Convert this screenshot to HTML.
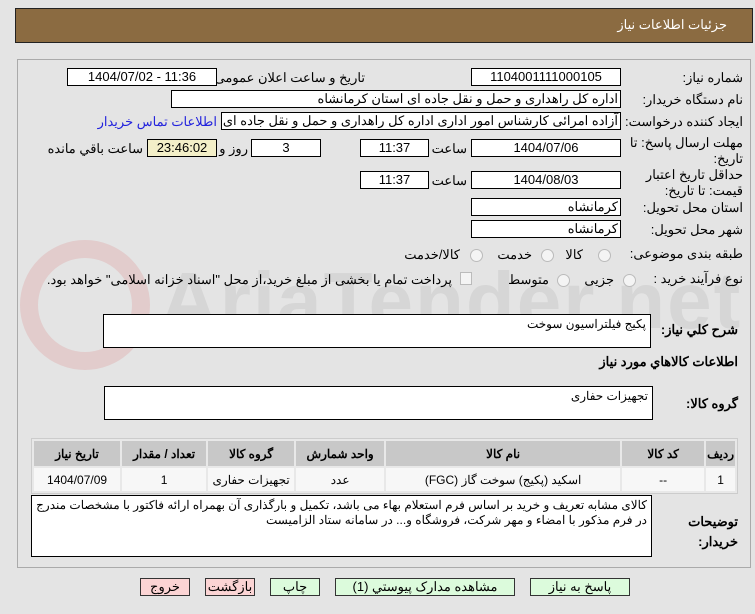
<!DOCTYPE html>
<html><head><meta charset="utf-8"><style>
body{margin:0;width:755px;height:614px;background:#e4e4e4;font-family:"Liberation Sans","Noto Sans CJK SC",sans-serif;font-size:12px;color:#000;position:relative;overflow:hidden}
.a{position:absolute;white-space:nowrap}
.hd{left:15px;top:8px;width:736px;height:33px;background:#8b6b41;border:1px solid #222}
.pn{left:17px;top:59px;width:732px;height:507px;border:1px solid #aaa}
.b{position:absolute;background:#fff;border:1px solid #000;box-sizing:border-box;height:18px;line-height:16px;text-align:center;font-size:13px}
.l{position:absolute;white-space:nowrap;direction:rtl;text-align:right;font-size:13px}
.ta{position:absolute;background:#fff;border:1px solid #000;box-sizing:border-box;direction:rtl;padding:2px 4px;font-size:12px}
.rd{position:absolute;width:11px;height:11px;border-radius:50%;border:1px solid #bbb;background:#f4f4f4}
table{position:absolute;left:31px;top:438px;width:707px;border-collapse:separate;border-spacing:2px;background:#e8e8e8;border:1px solid #ccc;direction:rtl;font-size:12px}
th{background:#c8c8c8;height:23px;font-weight:bold}
td{background:#f7f7f7;height:21px;text-align:center}
.bt{position:absolute;top:578px;height:18px;border:1px solid #333;box-sizing:border-box;text-align:center;line-height:16px;font-size:13px;direction:rtl}
</style></head><body>
<div class="a hd"></div>
<div class="l" style="right:28px;top:17px;color:#fff;font-size:13px">جزئیات اطلاعات نیاز</div>
<div class="a pn"></div>
<div class="a" style="left:20px;top:240px;width:130px;height:130px;border-radius:50%;border:18px solid rgba(220,120,120,0.22);box-sizing:border-box"></div>
<div class="a" style="left:160px;top:255px;font-size:80px;font-weight:bold;color:rgba(150,150,150,0.18);letter-spacing:2px">AriaTender.net</div>

<div class="l" style="right:12px;top:70px">شماره نیاز:</div>
<div class="b" style="left:471px;top:68px;width:150px">1104001111000105</div>
<div class="l" style="right:390px;top:70px">تاریخ و ساعت اعلان عمومی:</div>
<div class="b" style="left:67px;top:68px;width:150px">1404/07/02 - 11:36</div>

<div class="l" style="right:12px;top:92px">نام دستگاه خریدار:</div>
<div class="b" style="left:171px;top:90px;width:450px;text-align:right;direction:rtl;padding-right:2px">اداره کل راهداری و حمل و نقل جاده ای استان کرمانشاه</div>

<div class="l" style="right:12px;top:114px">ایجاد کننده درخواست:</div>
<div class="b" style="left:221px;top:112px;width:400px;text-align:right;direction:rtl;padding-right:2px;overflow:hidden">آزاده امرائی کارشناس امور اداری اداره کل راهداری و حمل و نقل جاده ای استان</div>
<div class="l" style="right:538px;top:114px;color:#2222dd">اطلاعات تماس خریدار</div>

<div class="l" style="right:12px;top:135px;line-height:16px">مهلت ارسال پاسخ: تا<br>تاریخ:</div>
<div class="b" style="left:471px;top:139px;width:150px">1404/07/06</div>
<div class="l" style="right:288px;top:141px">ساعت</div>
<div class="b" style="left:360px;top:139px;width:69px">11:37</div>
<div class="b" style="left:251px;top:139px;width:70px">3</div>
<div class="l" style="right:507px;top:141px">روز و</div>
<div class="b" style="left:147px;top:139px;width:70px;background:#f3efc8">23:46:02</div>
<div class="l" style="right:612px;top:141px">ساعت باقي مانده</div>

<div class="l" style="right:12px;top:167px;line-height:16px">حداقل تاریخ اعتبار<br>قیمت: تا تاریخ:</div>
<div class="b" style="left:471px;top:171px;width:150px">1404/08/03</div>
<div class="l" style="right:288px;top:173px">ساعت</div>
<div class="b" style="left:360px;top:171px;width:69px">11:37</div>

<div class="l" style="right:12px;top:200px">استان محل تحویل:</div>
<div class="b" style="left:471px;top:198px;width:150px;text-align:right;padding-right:2px">کرمانشاه</div>
<div class="l" style="right:12px;top:222px">شهر محل تحویل:</div>
<div class="b" style="left:471px;top:220px;width:150px;text-align:right;padding-right:2px">کرمانشاه</div>

<div class="l" style="right:12px;top:246px">طبقه بندی موضوعی:</div>
<div class="rd" style="left:598px;top:249px"></div><div class="l" style="right:172px;top:247px">کالا</div>
<div class="rd" style="left:541px;top:249px"></div><div class="l" style="right:223px;top:247px">خدمت</div>
<div class="rd" style="left:470px;top:249px"></div><div class="l" style="right:295px;top:247px">کالا/خدمت</div>

<div class="l" style="right:12px;top:271px">نوع فرآیند خرید :</div>
<div class="rd" style="left:623px;top:274px"></div><div class="l" style="right:141px;top:272px">جزیی</div>
<div class="rd" style="left:557px;top:274px"></div><div class="l" style="right:206px;top:272px">متوسط</div>
<div class="a" style="left:460px;top:272px;width:10px;height:11px;border:1px solid #bbb;background:#f4f4f4"></div>
<div class="l" style="right:303px;top:272px">پرداخت تمام یا بخشی از مبلغ خرید،از محل "اسناد خزانه اسلامی" خواهد بود.</div>

<div class="l" style="right:17px;top:322px;font-weight:bold">شرح كلي نياز:</div>
<div class="ta" style="left:103px;top:314px;width:548px;height:34px">پکیج فیلتراسیون سوخت</div>
<div class="l" style="right:17px;top:354px;font-weight:bold">اطلاعات كالاهاي مورد نياز</div>
<div class="l" style="right:17px;top:396px;font-weight:bold">گروه کالا:</div>
<div class="ta" style="left:104px;top:386px;width:549px;height:34px">تجهیزات حفاری</div>

<table><tr><th style="width:26px">رديف</th><th style="width:80px">کد کالا</th><th style="width:232px">نام کالا</th><th style="width:86px">واحد شمارش</th><th style="width:84px">گروه کالا</th><th style="width:82px">تعداد / مقدار</th><th>تاريخ نياز</th></tr>
<tr><td>1</td><td>--</td><td>اسکید (پکیج) سوخت گاز (FGC)</td><td>عدد</td><td>تجهیزات حفاری</td><td>1</td><td>1404/07/09</td></tr></table>

<div class="l" style="right:17px;top:512px;font-weight:bold;line-height:20px">توضیحات<br>خریدار:</div>
<div class="ta" style="left:31px;top:495px;width:621px;height:62px;line-height:15px">کالای مشابه تعریف و خرید بر اساس فرم استعلام بهاء می باشد، تکمیل و بارگذاری آن بهمراه ارائه فاکتور با مشخصات مندرج در فرم مذکور با امضاء و مهر شرکت، فروشگاه و... در سامانه ستاد الزامیست</div>

<div class="bt" style="left:140px;width:50px;background:#fbd4d4">خروج</div>
<div class="bt" style="left:205px;width:50px;background:#fbd4d4">بازگشت</div>
<div class="bt" style="left:270px;width:50px;background:#dcfbdc">چاپ</div>
<div class="bt" style="left:335px;width:180px;background:#dcfbdc">مشاهده مدارک پیوستي (1)</div>
<div class="bt" style="left:530px;width:100px;background:#dcfbdc">پاسخ به نیاز</div>
</body></html>
